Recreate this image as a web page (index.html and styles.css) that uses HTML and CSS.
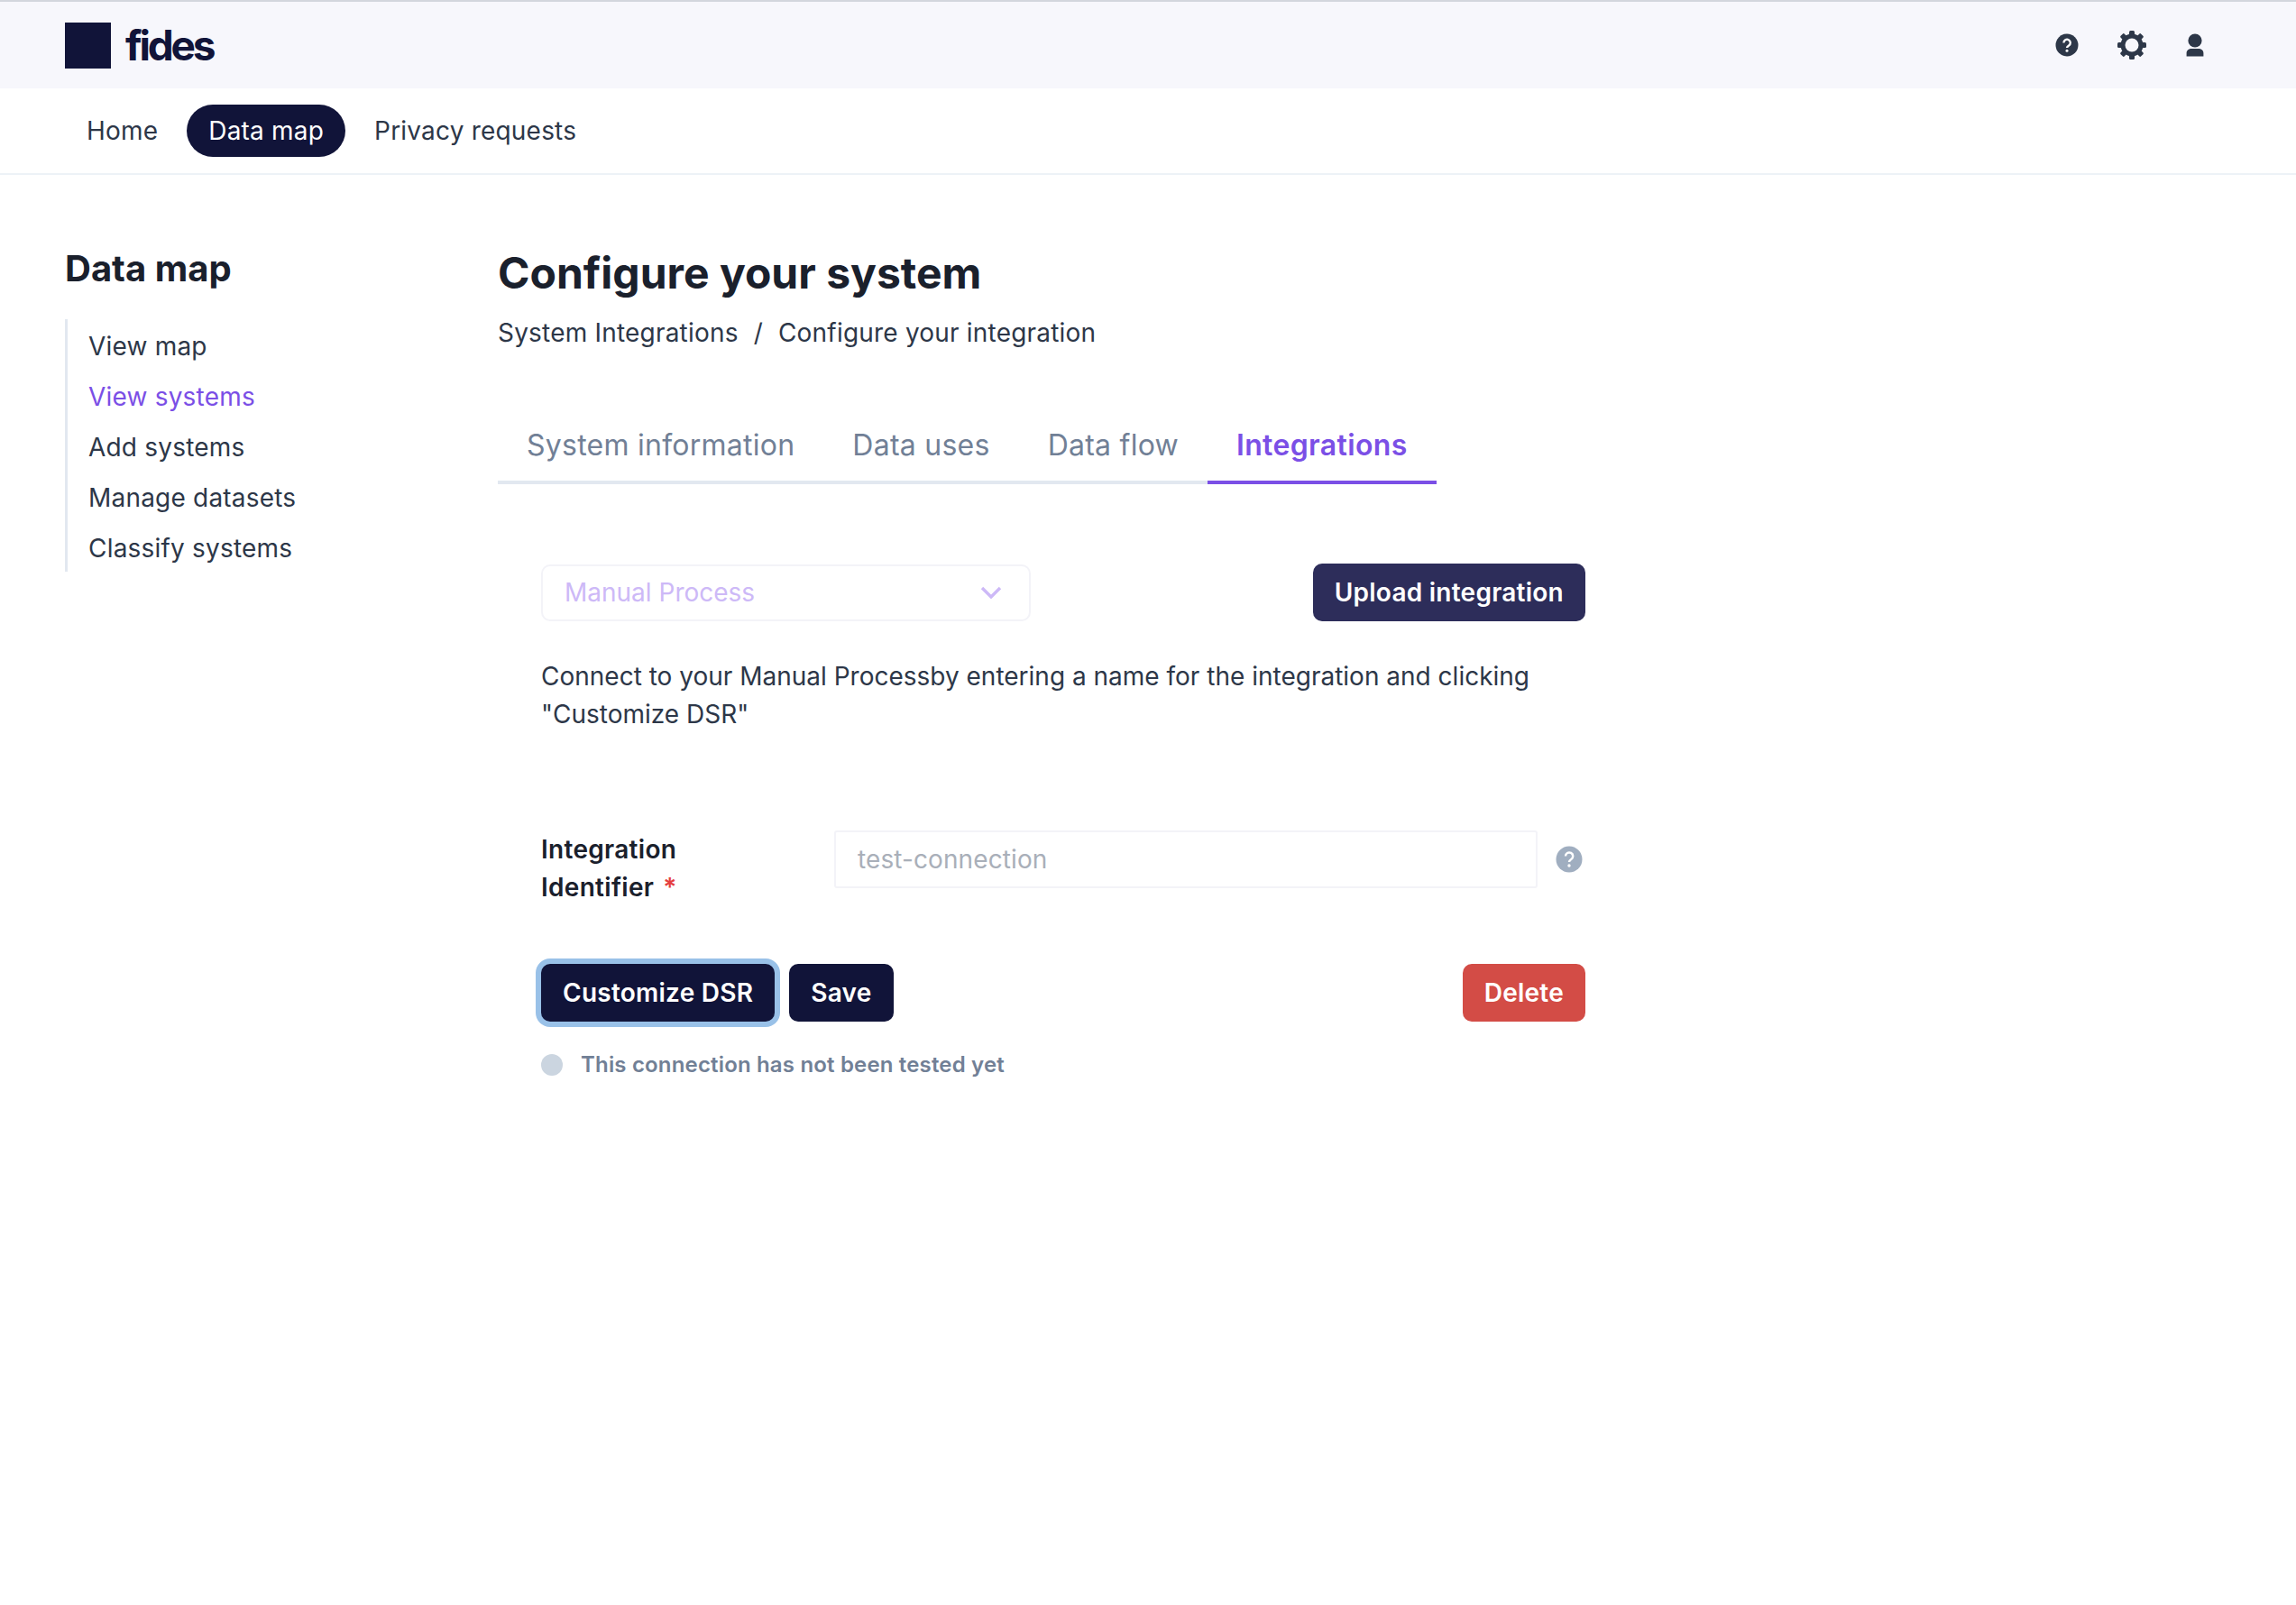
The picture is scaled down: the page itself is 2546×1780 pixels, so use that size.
FILE: index.html
```html
<!DOCTYPE html>
<html lang="en">
<head>
<meta charset="utf-8">
<title>Configure your system</title>
<link rel="stylesheet" href="styles.css">
</head>
<body>
<header class="topbar">
  <div class="brand"><span class="logo-mark"></span><span class="logo-text">fides</span></div>
  <div class="top-icons">
    <svg class="icon-help" viewBox="0 0 26 26" aria-hidden="true"><circle cx="13" cy="13" r="12.5" fill="#2d3748"/><path d="M9.4 10.4a3.7 3.7 0 1 1 5.7 3.1c-1.4.9-2.1 1.4-2.1 2.6" fill="none" stroke="#fff" stroke-width="2.3"/><circle cx="13" cy="19.2" r="1.5" fill="#fff"/></svg>
    <svg class="icon-gear" viewBox="0 0 32 32" aria-hidden="true"><g fill="#2d3748"><rect x="13" y="0" width="6" height="32" rx="1.5"/><rect x="13" y="0" width="6" height="32" rx="1.5" transform="rotate(45 16 16)"/><rect x="13" y="0" width="6" height="32" rx="1.5" transform="rotate(90 16 16)"/><rect x="13" y="0" width="6" height="32" rx="1.5" transform="rotate(135 16 16)"/></g><circle cx="16" cy="16" r="10" fill="none" stroke="#2d3748" stroke-width="5"/><circle cx="16" cy="16" r="7.5" fill="#f7f7fc"/></svg>
    <svg class="icon-user" viewBox="0 0 20 26" aria-hidden="true"><circle cx="10" cy="8" r="7.6" fill="#2d3748"/><path d="M0.6 25.5v-3.6c0-3.2 2.6-5 5.6-5h7.6c3 0 5.6 1.8 5.6 5v3.6z" fill="#2d3748"/></svg>
  </div>
</header>
<nav class="mainnav">
  <a class="pill">Home</a>
  <a class="pill pill-active">Data map</a>
  <a class="pill">Privacy requests</a>
</nav>
<main class="layout">
  <aside class="side">
    <h2 class="side-title">Data map</h2>
    <ul class="side-list">
      <li>View map</li>
      <li class="side-active">View systems</li>
      <li>Add systems</li>
      <li>Manage datasets</li>
      <li>Classify systems</li>
    </ul>
  </aside>
  <section class="content">
    <h1 class="page-title">Configure your system</h1>
    <div class="crumbs"><span>System Integrations</span><span>/</span><span>Configure your integration</span></div>
    <div class="tabs">
      <span class="tab">System information</span>
      <span class="tab">Data uses</span>
      <span class="tab">Data flow</span>
      <span class="tab tab-active">Integrations</span>
    </div>
    <div class="panel">
      <div class="row-between">
        <div class="select"><span>Manual Process</span>
          <svg class="chev" viewBox="0 0 24 14" aria-hidden="true"><path d="M2 2l10 10 10-10" fill="none" stroke="#cdb9f7" stroke-width="3.4"/></svg>
        </div>
        <button class="btn btn-upload">Upload integration</button>
      </div>
      <p class="desc">Connect to your Manual Processby entering a name for the integration and clicking "Customize DSR"</p>
      <div class="field">
        <div class="field-label">
          <span class="label-line">Integration</span>
          <span class="label-line"><span>Identifier</span><span class="req">*</span></span>
        </div>
        <div class="input">test-connection</div>
        <svg class="icon-tip" viewBox="0 0 30 30" aria-hidden="true"><circle cx="15" cy="15" r="14.5" fill="#a0aec0"/><path d="M11 11.6a4.1 4.1 0 1 1 6.3 3.4c-1.500 1-2.300 1.600-2.300 2.900" fill="none" stroke="#fff" stroke-width="2.500"/><circle cx="15" cy="22" r="1.700" fill="#fff"/></svg>
      </div>
      <div class="actions">
        <button class="btn btn-dark btn-focus">Customize DSR</button>
        <button class="btn btn-dark">Save</button>
        <button class="btn btn-danger">Delete</button>
      </div>
      <div class="status"><span class="dot"></span><span>This connection has not been tested yet</span></div>
    </div>
  </section>
</main>
</body>
</html>
```
FILE: styles.css
```css
* { box-sizing: border-box; }
html, body { margin: 0; padding: 0; }
body {
  min-height: 1780px;
  background: #fff;
  color: #2d3748;
  font-family: Inter, "Liberation Sans", sans-serif;
  font-size: 28px;
  letter-spacing: 0.2px;
}
.topbar {
  height: 98px;
  border-top: 2px solid #d3d6dd;
  background: #f7f7fc;
  padding: 0 30px 0 72px;
  display: flex;
  align-items: center;
  justify-content: space-between;
}
.brand { display: flex; align-items: center; gap: 16px; }
.logo-mark { width: 51px; height: 51px; background: #111439; }
.logo-text {
  font-size: 46px;
  font-weight: 700;
  letter-spacing: -3.2px;
  line-height: 51px;
  color: #111439;
}
.top-icons { display: flex; align-items: center; padding-right: 72px; }
.icon-help { width: 26px; height: 26px; margin-right: 43px; }
.icon-gear { width: 32px; height: 32px; margin-right: 44px; }
.icon-user { width: 20px; height: 26px; }
.mainnav {
  height: 96px;
  border-bottom: 2px solid #edf2f7;
  padding: 0 72px;
  display: flex;
  align-items: center;
  gap: 8px;
}
.pill {
  height: 58px;
  padding: 0 24px;
  border-radius: 29px;
  display: flex;
  align-items: center;
  color: #2d3748;
}
.pill-active { background: #111439; color: #fff; }
.layout { display: flex; padding: 80px 72px 0; }
.side { width: 480px; flex: none; }
.side-title {
  margin: 0;
  font-size: 40px;
  font-weight: 700;
  letter-spacing: 0;
  line-height: 48px;
  color: #1a202c;
}
.side-list {
  list-style: none;
  margin: 32px 0 0;
  padding: 3px 0 0 23px;
  border-left: 3px solid #e2e8f0;
  height: 280px;
  display: flex;
  flex-direction: column;
  justify-content: center;
}
.side-list li { height: 56px; line-height: 56px; }
.side-active { color: #7b4fe6; }
.content { width: 1206px; }
.page-title {
  margin: 0;
  font-size: 48px;
  font-weight: 700;
  letter-spacing: 0;
  line-height: 58px;
  color: #1a202c;
}
.crumbs { display: flex; gap: 17px; margin-top: 17px; line-height: 40px; }
.tabs {
  display: inline-flex;
  margin-top: 70px;
  border-bottom: 4px solid #e2e8f0;
  vertical-align: top;
}
.tab {
  padding: 0 32px;
  height: 78px;
  line-height: 69px;
  font-size: 32px;
  letter-spacing: 0.25px;
  color: #718096;
  margin-bottom: -4px;
  border-bottom: 4px solid transparent;
}
.tab-active { color: #7b4fe6; font-weight: 600; letter-spacing: 0.35px; border-bottom-color: #7b4fe6; }
.panel { padding: 88px 0 0 48px; }
.row-between { display: flex; justify-content: space-between; align-items: center; height: 64px; }
.select {
  width: 543px;
  height: 63px;
  border: 2px solid #f3f3f8;
  border-radius: 10px;
  padding: 0 30px 0 24px;
  display: flex;
  align-items: center;
  justify-content: space-between;
  color: #cdb9f7;
  letter-spacing: 0;
}
.chev { width: 24px; height: 14px; }
.btn {
  height: 64px;
  padding: 0 24px;
  border: 0;
  border-radius: 10px;
  font-family: inherit;
  font-size: 28px;
  font-weight: 600;
  letter-spacing: 0.25px;
  color: #fff;
}
.btn-upload { background: #2d2d5a; }
.desc { margin: 40px 0 0; line-height: 42px; width: 1130px; letter-spacing: 0; }
.field { display: flex; align-items: flex-start; margin-top: 108px; }
.field-label {
  width: 325px;
  flex: none;
  font-weight: 600;
  line-height: 42px;
  letter-spacing: 0.3px;
  color: #1a202c;
}
.label-line { display: flex; gap: 10px; }
.req { color: #e53e3e; }
.input {
  width: 780px;
  height: 64px;
  border: 2px solid #f3f3f8;
  border-radius: 3px;
  padding: 0 24px;
  display: flex;
  align-items: center;
  color: #a9afb9;
  letter-spacing: 0.1px;
}
.icon-tip { width: 30px; height: 30px; margin: 17px 0 0 20px; }
.actions { display: flex; gap: 16px; margin-top: 64px; }
.btn-dark { background: #111439; }
.btn-danger { background: #d34c46; margin-left: auto; }
.btn-focus { box-shadow: 0 0 0 6px #99c1e8; }
.status {
  display: flex;
  align-items: center;
  gap: 20px;
  margin-top: 33px;
  font-size: 24px;
  font-weight: 600;
  letter-spacing: 0.17px;
  color: #718096;
}
.dot { width: 24px; height: 24px; border-radius: 50%; background: #cbd5e0; }
```
